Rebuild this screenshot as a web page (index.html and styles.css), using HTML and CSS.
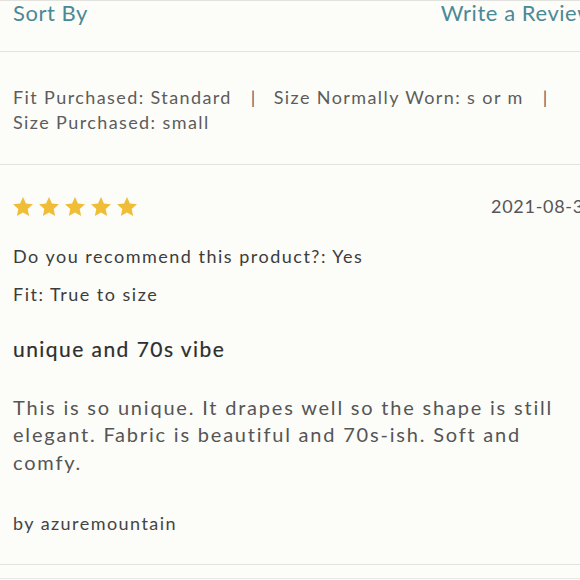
FILE: index.html
```html
<!DOCTYPE html>
<html>
<head>
<meta charset="utf-8">
<link rel="stylesheet" href="styles.css">
</head>
<body>
<div class="page">
  <header class="toolbar">
    <span class="link">Sort By</span>
    <span class="link">Write a Review</span>
  </header>
  <section class="details">
    <p class="meta">Fit Purchased: Standard<span class="sep">|</span>Size Normally Worn: s or m<span class="sep">|</span><br>Size Purchased: small</p>
  </section>
  <article class="review">
    <div class="review-head">
      <div class="stars">
        <svg class="star" viewBox="2 1.8 20 19.1"><path d="M12 1.8l2.95 6.5 7.05.75-5.3 4.8 1.5 7L12 17.3l-6.2 3.55 1.5-7-5.3-4.8 7.05-.75z"/></svg>
        <svg class="star" viewBox="2 1.8 20 19.1"><path d="M12 1.8l2.95 6.5 7.05.75-5.3 4.8 1.5 7L12 17.3l-6.2 3.55 1.5-7-5.3-4.8 7.05-.75z"/></svg>
        <svg class="star" viewBox="2 1.8 20 19.1"><path d="M12 1.8l2.95 6.5 7.05.75-5.3 4.8 1.5 7L12 17.3l-6.2 3.55 1.5-7-5.3-4.8 7.05-.75z"/></svg>
        <svg class="star" viewBox="2 1.8 20 19.1"><path d="M12 1.8l2.95 6.5 7.05.75-5.3 4.8 1.5 7L12 17.3l-6.2 3.55 1.5-7-5.3-4.8 7.05-.75z"/></svg>
        <svg class="star" viewBox="2 1.8 20 19.1"><path d="M12 1.8l2.95 6.5 7.05.75-5.3 4.8 1.5 7L12 17.3l-6.2 3.55 1.5-7-5.3-4.8 7.05-.75z"/></svg>
      </div>
      <span class="date">2021-08-31</span>
    </div>
    <p class="answer">Do you recommend this product?: Yes</p>
    <p class="answer fit">Fit: True to size</p>
    <h3 class="title">unique and 70s vibe</h3>
    <p class="body">This is so unique. It drapes well so the shape is still elegant. Fabric is beautiful and 70s-ish. Soft and comfy.</p>
    <p class="author">by azuremountain</p>
  </article>
  <div class="next"></div>
</div>
</body>
</html>
```

FILE: styles.css
```css
html, body {
  margin: 0;
  padding: 0;
  background: #fcfcf9;
  overflow: hidden;
}

body {
  font-family: Lato, "Open Sans", sans-serif;
  color: #555;
}

.page {
  width: 608px;
}

.toolbar {
  border-top: 1px solid #e2e2de;
  border-bottom: 1px solid #e2e2de;
  height: 52px;
  padding: 0 13px;
  display: flex;
  justify-content: space-between;
  align-items: flex-start;
  box-sizing: border-box;
}

.link {
  color: #4b8995;
  font-size: 22px;
  line-height: 24px;
  letter-spacing: 0.55px;
}

.details {
  border-bottom: 1px solid #e2e2de;
  padding: 33px 13px 0;
  height: 113px;
  box-sizing: border-box;
}

.meta {
  margin: 0;
  font-size: 18px;
  line-height: 25px;
  letter-spacing: 1.4px;
  color: #5c5c5c;
}

.sep {
  padding: 0 17px 0 19px;
  color: #666;
}

.review {
  padding: 31px 13px 29px;
  border-bottom: 1px solid #e2e2de;
}

.review-head {
  display: flex;
  justify-content: space-between;
  align-items: center;
  height: 20px;
}

.stars {
  display: flex;
  gap: 6px;
}

.star {
  width: 20px;
  height: 19px;
  fill: #efbd36;
}

.date {
  font-size: 18px;
  line-height: 20px;
  color: #555;
  letter-spacing: 0.7px;
}

.answer {
  margin: 28px 0 0;
  font-size: 18px;
  line-height: 24px;
  color: #3c3c3c;
  letter-spacing: 1.5px;
}

.answer.fit {
  margin-top: 14px;
}

.title {
  margin: 30px 0 0;
  font-size: 21px;
  font-weight: normal;
  line-height: 26px;
  color: #2e2e2e;
  letter-spacing: 1.45px;
  -webkit-text-stroke: 0.2px #2e2e2e;
}

.body {
  margin: 32px 0 0;
  max-width: 550px;
  font-size: 20px;
  line-height: 27.4px;
  color: #555;
  letter-spacing: 1.8px;
}

.author {
  margin: 35px 0 0;
  font-size: 18px;
  line-height: 24px;
  color: #444;
  letter-spacing: 1.45px;
}

.next {
  height: 13px;
  border-bottom: 1px solid #e8e8e5;
}
```
